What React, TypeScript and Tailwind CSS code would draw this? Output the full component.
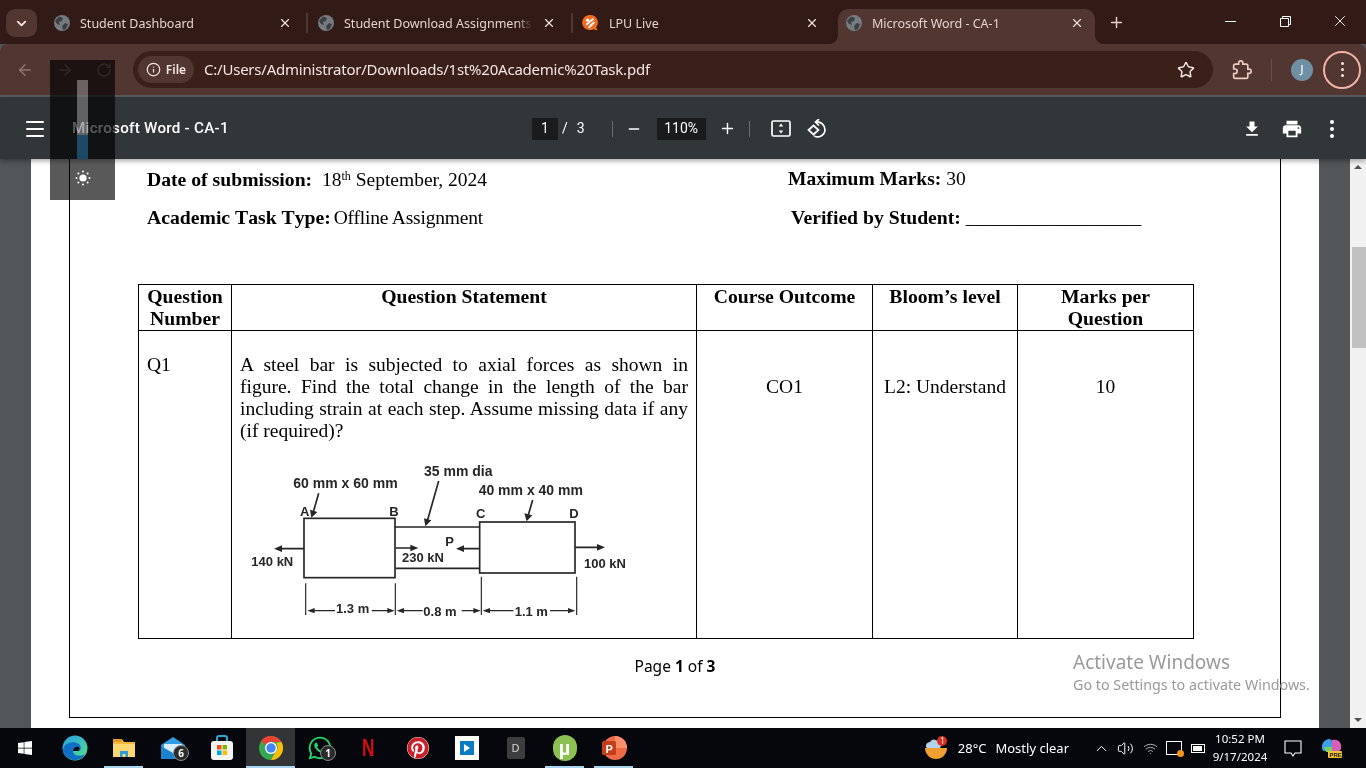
import { ArrowLeft, ArrowRight, ChevronDown, ChevronUp, Info, Menu, Minus, Plus, RotateCw, Star, Volume2, Wifi, X } from "lucide-react"
import { FaPinterest, FaWhatsapp, FaWindows } from "react-icons/fa"

const ui = "font-['Noto_Sans',sans-serif]"

function Globe() {
  return (
    <svg width="16" height="16" viewBox="0 0 16 16" className="shrink-0">
      <circle cx="8" cy="8" r="8" fill="#767b80" />
      <path d="M5 1.5 9 3 8 6 5 7 6 10 3 9 1 6ZM11 8l3 1-2 5-3 1-1-4Z" fill="#3c4043" />
    </svg>
  )
}

function LpuIcon() {
  return (
    <svg width="17" height="18" viewBox="0 0 18 18" className="shrink-0">
      <path d="M9 0.5a8 8 0 0 1 6 13l1.5 3.5-4.5-1.5A8 8 0 1 1 9 0.5Z" fill="#f26b21" />
      <path d="M4.5 11 12 4.5M7 14l6-6" stroke="#fff" strokeWidth="2" />
      <circle cx="6" cy="6" r="1.8" fill="#fff" />
    </svg>
  )
}

function Tab({ title, icon, className, fade, active }: { title: string; icon: React.ReactNode; className: string; fade?: boolean; active?: boolean }) {
  return (
    <div className={`relative flex items-center gap-[10px] h-[35px] pb-[5px] shrink-0 ${className} ${active ? "bg-[#523631] rounded-t-[10px]" : ""}`}>
      {active && <div className="absolute left-[-8px] bottom-0 w-2 h-2 bg-[radial-gradient(circle_at_0_0,transparent_7.5px,#523631_8px)]" />}
      {active && <div className="absolute right-[-8px] bottom-0 w-2 h-2 bg-[radial-gradient(circle_at_100%_0,transparent_7.5px,#523631_8px)]" />}
      <div className="mb-[2px] shrink-0">{icon}</div>
      <span className={`flex-1 overflow-hidden whitespace-nowrap text-[12.5px] text-[#e3d3cf] ${fade ? "mask-r-from-[92%] mask-r-to-100%" : ""}`}>{title}</span>
      <X size={14} strokeWidth={2} className="text-[#efe0dc] shrink-0 mb-[3px]" />
    </div>
  )
}

function Diagram() {
  const big = "fill-[#262626] font-['Liberation_Sans',sans-serif] font-bold text-[42px]"
  const t = "fill-[#262626] font-['Liberation_Sans',sans-serif] font-bold text-[39px]"
  return (
    <svg viewBox="0 0 1200 525" className="w-[400px] h-[175px] blur-[0.35px]">
      <g fill="none" stroke="#262626" strokeWidth="5">
        <rect x="192" y="190" width="273" height="178" />
        <rect x="719" y="201" width="286" height="153" />
        <path d="M465 216H718M467 340H720" />
        <path d="M192 281H120M468 279H515M718 281H668M1006 277H1075" />
        <path d="M236 115 218 178M596 78 560 205M878 135 862 190" />
        <path d="M197 385V480M466 385V480M724 365V480M1010 365V480" strokeWidth="3.5" />
        <path d="M215 467H285M395 467H450M480 467H548M665 467H712M738 467H820M930 467H995" strokeWidth="3.5" />
      </g>
      <g fill="#262626">
        <path d="M102 281 126 271V291ZM535 279 511 269V289ZM648 281 672 271V291ZM1095 277 1071 267V287Z" />
        <path d="M214 188 210 164 232 171ZM556 214 552 190 574 196ZM860 199 853 175 877 181Z" />
        <path d="M202 467 224 459V475ZM464 467 442 459V475ZM470 467 492 459V475ZM722 467 700 459V475ZM728 467 750 459V475ZM1006 467 984 459V475Z" />
      </g>
      <text x="160" y="100" className={big}>60 mm x 60 mm</text>
      <text x="552" y="63" className={big}>35 mm dia</text>
      <text x="716" y="121" className={big}>40 mm x 40 mm</text>
      <text x="180" y="182" className={t}>A</text>
      <text x="448" y="182" className={t}>B</text>
      <text x="708" y="190" className={t}>C</text>
      <text x="988" y="190" className={t}>D</text>
      <text x="616" y="272" className={t}>P</text>
      <text x="34" y="332" className={t}>140 kN</text>
      <text x="486" y="322" className={t}>230 kN</text>
      <text x="1032" y="338" className={t}>100 kN</text>
      <text x="288" y="474" className={t}>1.3 m</text>
      <text x="550" y="483" className={t}>0.8 m</text>
      <text x="824" y="484" className={t}>1.1 m</text>
    </svg>
  )
}

function Edge() {
  return (
    <svg width="26" height="26" viewBox="0 0 26 26">
      <defs>
        <linearGradient id="edgeA" x1="0.2" y1="0" x2="0.9" y2="0.9">
          <stop offset="0" stopColor="#2aa5dd" />
          <stop offset="1" stopColor="#52dc8f" />
        </linearGradient>
      </defs>
      <circle cx="13" cy="13" r="12.5" fill="url(#edgeA)" />
      <path d="M1 15C2 8 11 5 17 9c3 3 2 7-1 7H11c0 5 7 6 12 3-4 7-13 8-18 3-2-2-4-4-4-7Z" fill="#0f6fc6" />
      <path d="M11 16c0-3 3-5 6-4 1 2 0 4-1 4Z" fill="#0b0f14" />
    </svg>
  )
}

function Explorer() {
  return (
    <svg width="24" height="24" viewBox="0 0 24 24">
      <path d="M1 3h9l2 3h11v15H1Z" fill="#f5b93a" />
      <path d="M1 8h22v13H1Z" fill="#fcd872" />
      <path d="M8 21v-6h8v6h-2.5v-3h-3v3Z" fill="#2b9bd8" />
      <path d="M1 3h9v3H1Z" fill="#e09a1f" />
    </svg>
  )
}

function Mail() {
  return (
    <svg width="26" height="24" viewBox="0 0 26 24">
      <path d="M1 9 13 1l12 8v14H1Z" fill="#2f9ee6" />
      <path d="M4 8h18v6l-9 5-9-5Z" fill="#d7eefb" />
      <path d="M1 10 13 17 25 10v13H1Z" fill="#1b83d0" />
    </svg>
  )
}

function Store() {
  return (
    <svg width="24" height="26" viewBox="0 0 24 26">
      <path d="M7 6V3a2 2 0 0 1 2-2h6a2 2 0 0 1 2 2v3" fill="none" stroke="#2fa6d8" strokeWidth="2" />
      <rect x="1" y="6" width="22" height="19" rx="3" fill="#f4f4f4" />
      <rect x="7" y="10" width="4.5" height="4.5" fill="#f25022" />
      <rect x="12.5" y="10" width="4.5" height="4.5" fill="#7fba00" />
      <rect x="7" y="15.5" width="4.5" height="4.5" fill="#00a4ef" />
      <rect x="12.5" y="15.5" width="4.5" height="4.5" fill="#ffb900" />
    </svg>
  )
}

function Chrome() {
  return (
    <svg width="24" height="24" viewBox="0 0 24 24">
      <circle cx="12" cy="12" r="12" fill="#34a853" />
      <path d="M12 0a12 12 0 0 1 10.4 6H12a6 6 0 0 0-5.5 3.5L2.2 5A12 12 0 0 1 12 0Z" fill="#ea4335" />
      <path d="M22.4 6A12 12 0 0 1 12 24l5.2-9A6 6 0 0 0 17 7Z" fill="#fbbc05" />
      <circle cx="12" cy="12" r="6" fill="#fff" />
      <circle cx="12" cy="12" r="4.7" fill="#4285f4" />
    </svg>
  )
}

function Ppt() {
  return (
    <svg width="26" height="24" viewBox="0 0 26 24">
      <circle cx="14" cy="12" r="12" fill="#ed6c47" />
      <path d="M14 0a12 12 0 0 1 12 12H14Z" fill="#ff8f6b" />
      <rect x="1" y="5" width="14" height="14" rx="1.5" fill="#c43e1c" />
      <text x="4.5" y="16.5" fill="#fff" fontSize="11" fontWeight="700" fontFamily="Liberation Sans">P</text>
    </svg>
  )
}

function Badge({ n }: { n: string }) {
  return (
    <span className="absolute left-[25px] top-[17px] w-[16px] h-[16px] rounded-full bg-[#2b2b2b] border border-[#888] flex items-center justify-center text-[10px] leading-none font-bold text-white">{n}</span>
  )
}

function TaskSlot({ children, open, current }: { children: React.ReactNode; open?: boolean; current?: boolean }) {
  return (
    <div className={`relative w-[49px] h-[40px] flex items-center justify-center shrink-0 ${current ? "bg-[#333436]" : ""}`}>
      {children}
      {open && <div className="absolute bottom-0 left-[5px] right-[5px] h-[2px] bg-[#a8d4f0]" />}
      {current && <div className="absolute bottom-0 left-0 right-0 h-[2px] bg-[#a8d4f0]" />}
    </div>
  )
}

export default function App() {
  const bold = "font-bold text-[19.7px]"
  return (
    <div className={`relative w-[1366px] h-[768px] overflow-hidden flex flex-col bg-[#525659] ${ui}`}>
      {/* tab strip */}
      <div className="h-[44px] bg-[#321b16] flex items-end shrink-0 relative">
        <div className="w-[31px] h-[28px] ml-[6px] mb-[7px] mr-[7px] rounded-[9px] bg-[#523631] flex items-center justify-center shrink-0">
          <ChevronDown size={15} strokeWidth={3} className="text-[#f2e4e0]" />
        </div>
        <Tab title="Student Dashboard" icon={<Globe />} className="w-[248px] pl-[10px] mr-[14px]" />
        <div className="w-[2px] h-[20px] bg-[#523631] mb-[11px]" />
        <Tab title="Student Download Assignments" icon={<Globe />} className="w-[250px] pl-[10px] pr-[2px] mr-[13px]" fade />
        <div className="w-[2px] h-[20px] bg-[#523631] mb-[11px]" />
        <Tab title="LPU Live" icon={<LpuIcon />} className="w-[249px] pl-[9px] pr-[3px]" />
        <div className="w-[16px]" />
        <Tab title="Microsoft Word - CA-1" icon={<Globe />} className="w-[257px] pl-[8px] pr-[11px]" active />
        <Plus size={17} strokeWidth={2} className="text-[#e9cfc8] ml-[13px] mb-[13px]" />
        <div className="ml-auto flex items-center mb-[14px] text-white">
          <div className="w-[11px] h-px bg-white mr-[44px]" />
          <svg width="11" height="11" viewBox="0 0 11 11" fill="none" stroke="currentColor" className="mr-[40px]">
            <path d="M.5 2.5h8v8h-8ZM2.5 2.5v-2h8v8h-2" />
          </svg>
          <X size={18} strokeWidth={1.2} className="mr-[17px]" />
        </div>
      </div>

      {/* address bar */}
      <div className="h-[51px] bg-[#523631] rounded-t-[8px] flex items-center shrink-0">
        <ArrowLeft size={18} className="ml-[16px] text-[#8d7570]" />
        <ArrowRight size={18} className="ml-[22px] text-[#8d7570]" />
        <RotateCw size={16} className="ml-[22px] text-[#8d7570]" />
        <div className="ml-[21px] w-[1080px] h-[37px] rounded-full bg-[#3a1f1a] flex items-center pl-[5px]">
          <div className="h-[27px] w-[56px] rounded-full bg-[#523631] flex items-center justify-center gap-[5px] text-[12px] font-semibold text-[#f3e6e2]">
            <Info size={15} />
            File
          </div>
          <span className="ml-[10px] text-[15px] tracking-[-0.22px] text-[#f3e6e2]">C:/Users/Administrator/Downloads/1st%20Academic%20Task.pdf</span>
          <Star size={18} className="ml-auto mr-[18px] text-[#f3e6e2]" />
        </div>
        <svg width="20" height="20" viewBox="0 0 24 24" className="ml-[19px]" fill="none" stroke="#f0c9bf" strokeWidth="2">
          <path d="M20.5 11H19V7c0-1.1-.9-2-2-2h-4V3.5C13 2.12 11.88 1 10.5 1S8 2.12 8 3.5V5H4c-1.1 0-1.99.9-1.99 2v3.8H3.5c1.49 0 2.7 1.21 2.7 2.7s-1.21 2.7-2.7 2.7H2V20c0 1.1.9 2 2 2h13c1.1 0 2-.9 2-2v-4h1.5c1.38 0 2.5-1.12 2.5-2.5S21.88 11 20.5 11z" />
        </svg>
        <div className="ml-[19px] w-px h-[22px] bg-[#6d504a]" />
        <div className="ml-[19px] w-[22px] h-[22px] rounded-full bg-[#6f8fa3] flex items-center justify-center text-[11px] font-semibold text-[#e8f0f5]">J</div>
        <div className="ml-[10px] w-[38px] h-[38px] rounded-full border-2 border-[#f3b3a4] flex flex-col items-center justify-center gap-[3px]">
          <div className="w-[3px] h-[3px] rounded-full bg-[#f3e6e2]" />
          <div className="w-[3px] h-[3px] rounded-full bg-[#f3e6e2]" />
          <div className="w-[3px] h-[3px] rounded-full bg-[#f3e6e2]" />
        </div>
      </div>
      <div className="h-[2px] bg-[#5a5d60] shrink-0" />

      {/* pdf toolbar */}
      <div className="relative z-10 h-[62px] pt-[1px] bg-[#323639] flex items-center shrink-0 text-white shadow-[0_2px_5px_rgba(0,0,0,0.35)] font-['Roboto',sans-serif]">
        <Menu size={24} strokeWidth={2} className="ml-[23px]" />
        <span className="ml-[25px] w-[460px] text-[15.2px] font-medium tracking-[0.25px]">Microsoft Word - CA-1</span>
        <div className="w-[26px] h-[22px] bg-[#191b1c] flex items-center justify-center text-[14px]">1</div>
        <span className="ml-[4px] text-[14px]">/</span>
        <span className="ml-[9px] text-[14px]">3</span>
        <div className="ml-[27px] w-px h-[16px] bg-[#6a6e71]" />
        <Minus size={16} strokeWidth={2} className="ml-[13px]" />
        <div className="ml-[15px] w-[49px] h-[22px] bg-[#191b1c] flex items-center justify-center text-[14px]">110%</div>
        <Plus size={17} strokeWidth={2} className="ml-[13px]" />
        <div className="ml-[13px] w-px h-[16px] bg-[#6a6e71]" />
        <svg width="20" height="18" viewBox="0 0 20 18" className="ml-[21px]" fill="none" stroke="currentColor" strokeWidth="1.7">
          <rect x="1" y="1" width="18" height="15" rx="1.5" />
          <path d="M10 3.5 7.8 6.5h4.4ZM10 13.5 7.8 10.5h4.4Z" fill="currentColor" stroke="none" />
        </svg>
        <svg width="20" height="20" viewBox="0 0 20 20" className="ml-[16px]" fill="none" stroke="currentColor" strokeWidth="1.7">
          <path d="M9 3a8 8 0 0 1 9 8 7.500 7.500 0 0 1-11 6" />
          <path d="M12 0 8.500 3 12 6.500" />
          <path d="M1.500 11 6.500 6.500 11.500 11 6.500 15.500Z" />
        </svg>
        <svg width="20" height="20" viewBox="0 0 24 24" fill="currentColor" className="ml-[415px]">
          <path d="M19 9h-4V3H9v6H5l7 7 7-7zM5 18v2h14v-2H5z" />
        </svg>
        <svg width="22" height="22" viewBox="0 0 24 24" fill="currentColor" className="ml-[19px]">
          <path d="M19 8H5c-1.660 0-3 1.340-3 3v6h4v4h12v-4h4v-6c0-1.660-1.340-3-3-3zm-3 11H8v-5h8v5zm3-7c-.550 0-1-.450-1-1s.450-1 1-1 1 .450 1 1-.450 1-1 1zm-1-9H6v4h12V3z" />
        </svg>
        <div className="ml-[27px] flex flex-col gap-[3px]">
          <div className="w-[4px] h-[4px] rounded-full bg-white" />
          <div className="w-[4px] h-[4px] rounded-full bg-white" />
          <div className="w-[4px] h-[4px] rounded-full bg-white" />
        </div>
      </div>

      {/* viewer */}
      <div className="flex-1 min-h-0 flex">
        <div className="flex-1 pl-[31px] overflow-hidden">
          <div className="w-[1288px] h-full bg-white pl-[38px]">
            <div className="w-[1212px] h-[559px] border-x border-b border-black font-['Liberation_Serif',serif] text-[19.5px] leading-[22px] text-black">
              <div className="flex pt-[9px] pl-[77px] h-[31px]">
                <div className="w-[641px]"><span className={bold}>Date of submission:</span>&nbsp; 18<sup className="text-[12px]">th</sup> September, 2024</div>
                <div><b>Maximum Marks:</b> 30</div>
              </div>
              <div className="flex mt-[16px] pl-[77px] h-[22px]">
                <div className="w-[644px]"><span className={`${bold} [font-kerning:none]`}>Academic Task Type:</span> <span className="-ml-[2px] tracking-[-0.2px]">Offline Assignment</span></div>
                <div><span className={bold}>Verified by Student:</span> __________________</div>
              </div>
              <table className="mt-[56px] ml-[68px] w-[1055px] table-fixed border-collapse border border-black">
                <colgroup>
                  <col className="w-[93px]" />
                  <col className="w-[465px]" />
                  <col className="w-[176px]" />
                  <col className="w-[145px]" />
                  <col className="w-[176px]" />
                </colgroup>
                <thead>
                  <tr className="h-[46px] align-top text-center text-[19.7px]">
                    <th className="border border-black">Question Number</th>
                    <th className="border border-black">Question Statement</th>
                    <th className="border border-black">Course Outcome</th>
                    <th className="border border-black">Bloom’s level</th>
                    <th className="border border-black px-[30px]">Marks per Question</th>
                  </tr>
                </thead>
                <tbody>
                  <tr className="h-[308px] align-top">
                    <td className="border border-black pt-[23px] pl-[8px]">Q1</td>
                    <td className="border border-black pt-[23px] px-[8px]">
                      <p className="text-justify">A steel bar is subjected to axial forces as shown in figure. Find the total change in the length of the bar including strain at each step. Assume missing data if any (if required)?</p>
                      <div className="mt-[13px]"><Diagram /></div>
                    </td>
                    <td className="border border-black pt-[45px] text-center">CO1</td>
                    <td className="border border-black pt-[45px] text-center">L2: Understand</td>
                    <td className="border border-black pt-[45px] text-center">10</td>
                  </tr>
                </tbody>
              </table>
              <div className={`mt-[16px] text-center text-[15.5px] ${ui}`}>Page <b>1</b> of <b>3</b></div>
            </div>
          </div>
        </div>
        <div className="w-[16px] bg-[#f1f1f1] flex flex-col items-end shrink-0">
          <div className="h-[16px] w-full flex items-center justify-center">
            <div className="w-0 h-0 border-x-[4px] border-x-transparent border-b-[4px] border-b-[#505050]" />
          </div>
          <div className="mt-[72px] w-[14px] h-[101px] bg-[#c1c1c1]" />
          <div className="mt-auto h-[16px] w-full flex items-center justify-center">
            <div className="w-0 h-0 border-x-[4px] border-x-transparent border-t-[4px] border-t-[#505050]" />
          </div>
        </div>
      </div>

      {/* taskbar */}
      <div className="h-[40px] bg-[#05070c] flex items-center shrink-0 text-white">
        <div className="w-[50px] flex justify-center shrink-0"><FaWindows size={16} /></div>
        <TaskSlot><Edge /></TaskSlot>
        <TaskSlot open><Explorer /></TaskSlot>
        <TaskSlot><Mail /><Badge n="6" /></TaskSlot>
        <TaskSlot><Store /></TaskSlot>
        <TaskSlot current><Chrome /></TaskSlot>
        <TaskSlot><FaWhatsapp size={26} className="text-[#25d366]" /><Badge n="1" /></TaskSlot>
        <TaskSlot><span className="font-['Liberation_Sans',sans-serif] text-[23px] font-bold text-[#d40a14] scale-x-75">N</span></TaskSlot>
        <TaskSlot><FaPinterest size={22} className="text-[#cb2027] bg-white rounded-full" /></TaskSlot>
        <TaskSlot>
          <div className="w-[24px] h-[24px] bg-white flex items-center justify-center">
            <div className="w-[14px] h-[14px] bg-[#0a7cc4] flex items-center justify-center">
              <div className="w-0 h-0 border-y-[4px] border-y-transparent border-l-[6px] border-l-white" />
            </div>
          </div>
        </TaskSlot>
        <TaskSlot><div className="w-[18px] h-[22px] rounded-[2px] bg-[#3d3d3d] flex items-center justify-center text-[11px] text-[#d5d5d5]">D</div></TaskSlot>
        <TaskSlot open>
          <div className="w-[24px] h-[26px] rounded-full bg-[#8cc152] flex items-center justify-center text-[20px] font-bold text-white font-['Liberation_Sans',sans-serif]">µ</div>
        </TaskSlot>
        <TaskSlot open><Ppt /></TaskSlot>

        <div className="ml-auto flex items-center">
          <svg width="24" height="24" viewBox="0 0 24 24">
            <path d="M1 12a11 11 0 0 0 22 0Z" fill="#f0a030" />
            <path d="M2 11a4 4 0 0 1 4-5 5 5 0 0 1 9 1 3 3 0 0 1 1 5H3Z" fill="#b5d3ea" />
            <circle cx="18" cy="5" r="5" fill="#d92d20" />
            <text x="16.2" y="8" fontSize="8" fill="#fff" fontFamily="Noto Sans">1</text>
          </svg>
          <span className="ml-[10px] text-[13px] pt-px">28°C</span>
          <span className="ml-[9px] text-[13px] mr-[24px] pt-px">Mostly clear</span>
          <ChevronUp size={17} strokeWidth={1.4} />
          <Volume2 size={17} strokeWidth={1.4} className="ml-[7px]" />
          <Wifi size={15} strokeWidth={1.5} className="ml-[9px] text-[#b9b9b9]" />
          <div className="relative ml-[8px] w-[16px] h-[14px] border border-white">
            <div className="absolute -right-[3px] -bottom-[3px] w-[7px] h-[7px] rounded-full bg-[#f7931a]" />
          </div>
          <div className="ml-[9px] w-[14px] h-[9px] border border-white p-px"><div className="w-[9px] h-full bg-white" /></div>
          <div className="ml-[5px] w-[60px] text-center text-[11.5px] leading-[18px]">
            <div>10:52 PM</div>
            <div>9/17/2024</div>
          </div>
          <svg width="18" height="17" viewBox="0 0 18 17" className="ml-[14px]" fill="none" stroke="white" strokeWidth="1.1">
            <path d="M1 1h16v12h-6l-2 3-2-3H1Z" />
          </svg>
          <svg width="22" height="20" viewBox="0 0 22 20" className="ml-[19px] mr-[23px]">
            <path d="M5 2c3-2 6-1 6 2v9H3C0 13 0 4 5 2Z" fill="#3aa0e8" />
            <path d="M11 2c4-1 8 0 9 5s-1 6-3 6h-6Z" fill="#d85fb5" />
            <path d="M3 9h8v5H5Z" fill="#7ccf5a" />
            <rect x="7" y="13" width="14" height="7" rx="1" fill="#f2c230" />
            <text x="8.500" y="19" fontSize="6" fontWeight="700" fill="#1c1c1c" fontFamily="Liberation Sans">PRE</text>
          </svg>
        </div>
      </div>

      {/* activate windows watermark */}
      <div className="absolute left-[1073px] top-[650px] text-[#9a9a9a] pointer-events-none">
        <div className="text-[19px] leading-[25px]">Activate Windows</div>
        <div className="text-[14.3px] leading-[20px] whitespace-nowrap">Go to Settings to activate Windows.</div>
      </div>

      {/* brightness slider overlay */}
      <div className="absolute z-20 left-[50px] top-[60px] w-[65px] h-[140px] bg-black/65 flex justify-center pt-[110px]">
        <svg width="16" height="16" viewBox="0 0 16 16" fill="white">
          <circle cx="8" cy="8" r="3.600" />
          <circle cx="8" cy="1.500" r="1" />
          <circle cx="8" cy="14.500" r="1" />
          <circle cx="1.500" cy="8" r="1" />
          <circle cx="14.500" cy="8" r="1" />
          <circle cx="3.400" cy="3.400" r="1" />
          <circle cx="12.600" cy="3.400" r="1" />
          <circle cx="3.400" cy="12.600" r="1" />
          <circle cx="12.600" cy="12.600" r="1" />
        </svg>
      </div>
      <div className="absolute z-30 left-[77px] top-[80px] w-[11px] h-[55px] bg-[#505050] mix-blend-plus-lighter" />
      <div className="absolute z-30 left-[77px] top-[135px] w-[11px] h-[24px] bg-[#1c4a66]" />
    </div>
  )
}
